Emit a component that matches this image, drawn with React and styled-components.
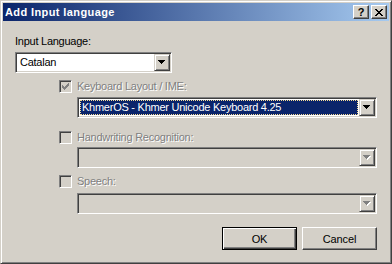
import React from "react";
import styled, { createGlobalStyle, css } from "styled-components";

const GlobalStyle = createGlobalStyle`
  html, body { margin: 0; padding: 0; background: #d4d0c8; }
  body { font-family: "Liberation Sans", Arial, sans-serif; font-size: 11px; }
  * { box-sizing: border-box; }
`;

const Window = styled.div`
  width: 392px;
  height: 264px;
  display: flex;
  flex-direction: column;
  background: #d4d0c8;
  border: 1px solid;
  border-color: #d4d0c8 #404040 #404040 #d4d0c8;
  box-shadow: inset 1px 1px #ffffff, inset -1px -1px #808080;
  padding: 2px;
`;

const TitleBar = styled.div`
  height: 18px;
  display: flex;
  align-items: center;
  padding: 0 2px;
  background: linear-gradient(to right, #0a246a, #a6caf0);
`;

const Title = styled.span`
  color: #ffffff;
  font-weight: bold;
  font-size: 11px;
  letter-spacing: 0.4px;
  line-height: 14px;
`;

const CaptionButtons = styled.div`
  margin-left: auto;
  display: flex;
  gap: 2px;
`;

const CaptionButton = styled.div`
  width: 16px;
  height: 14px;
  display: flex;
  align-items: center;
  justify-content: center;
  background: #d4d0c8;
  border: 1px solid;
  border-color: #ffffff #404040 #404040 #ffffff;
  box-shadow: inset -1px -1px #808080;
  color: #000;
  font-weight: bold;
  font-size: 11px;
  line-height: 12px;
`;

const Body = styled.div`
  flex: 1;
  display: flex;
  flex-direction: column;
  padding: 14px 12px 11px 12px;
`;

const Label = styled.div`
  height: 13px;
  line-height: 13px;
  color: ${(p) => (p.$disabled ? "#808080" : "#000")};
  text-shadow: ${(p) => (p.$disabled ? "1px 1px 0 #ffffff" : "none")};
  letter-spacing: -0.25px;
  white-space: nowrap;
`;

const Combo = styled.div`
  width: ${(p) => p.$width}px;
  height: 21px;
  margin-top: ${(p) => p.$mt || 0}px;
  margin-left: ${(p) => p.$ml || 0}px;
  display: flex;
  padding: 1px;
  border: 1px solid;
  border-color: #808080 #ffffff #ffffff #808080;
  box-shadow: inset 1px 1px #404040, inset -1px -1px #d4d0c8;
  background: ${(p) => (p.$disabled ? "#d4d0c8" : "#ffffff")};
`;

const ComboField = styled.div`
  flex: 1;
  min-width: 0;
  padding: 1px;
  display: flex;
`;

const ComboValue = styled.div`
  flex: 1;
  line-height: 15px;
  padding-left: 2px;
  letter-spacing: -0.25px;
  white-space: nowrap;
  overflow: hidden;
  ${(p) =>
    p.$selected
      ? css`
          background: #0a246a;
          color: #ffffff;
          outline: 1px dotted #f5db95;
          outline-offset: -1px;
        `
      : css`
          color: #000;
        `}
`;

const DropButton = styled.div`
  width: 16px;
  height: 17px;
  flex: none;
  display: flex;
  align-items: center;
  justify-content: center;
  background: #d4d0c8;
  border: 1px solid;
  border-color: #d4d0c8 #404040 #404040 #d4d0c8;
  box-shadow: inset 1px 1px #ffffff, inset -1px -1px #808080;
`;

const Group = styled.div`
  display: flex;
  flex-direction: column;
  padding-left: 44px;
  margin-top: 7px;
`;

const CheckRow = styled.div`
  display: flex;
  align-items: center;
  gap: 5px;
  height: 13px;
  margin-top: ${(p) => p.$mt || 0}px;
`;

const CheckBox = styled.div`
  width: 13px;
  height: 13px;
  flex: none;
  position: relative;
  border: 1px solid;
  border-color: #808080 #ffffff #ffffff #808080;
  box-shadow: inset 1px 1px #404040, inset -1px -1px #d4d0c8;
  background: ${(p) => (p.$disabled ? "#d4d0c8" : "#ffffff")};
  display: flex;
  align-items: center;
  justify-content: center;
`;

const Buttons = styled.div`
  display: flex;
  justify-content: flex-end;
  gap: 5px;
  margin-top: 13px;
`;

const PushButton = styled.div`
  width: 75px;
  height: 23px;
  display: flex;
  align-items: center;
  justify-content: center;
  background: #d4d0c8;
  color: #000;
  letter-spacing: -0.1px;
  border: 1px solid;
  ${(p) =>
    p.$default
      ? css`
          border-color: #000000;
          box-shadow: inset 1px 1px #ffffff, inset -1px -1px #404040,
            inset -2px -2px #808080;
        `
      : css`
          border-color: #ffffff #404040 #404040 #ffffff;
          box-shadow: inset -1px -1px #808080;
        `}
`;

const Arrow = ({ disabled }) => (
  <svg width="8" height="5" viewBox="0 0 8 5" shapeRendering="crispEdges">
    {disabled && (
      <path
        transform="translate(1 1)"
        fill="#ffffff"
        d="M0 0h7v1h-7z M1 1h5v1h-5z M2 2h3v1h-3z M3 3h1v1h-1z"
      />
    )}
    <path
      fill={disabled ? "#808080" : "#000000"}
      d="M0 0h7v1h-7z M1 1h5v1h-5z M2 2h3v1h-3z M3 3h1v1h-1z"
    />
  </svg>
);

const CheckMark = () => (
  <svg width="7" height="7" viewBox="0 0 7 7" shapeRendering="crispEdges">
    <path
      fill="#808080"
      d="M6 0h1v1h-1z M5 1h2v1h-2z M0 2h1v1h-1z M4 2h3v1h-3z M0 3h2v1h-2z M3 3h3v1h-3z M0 4h5v1h-5z M1 5h3v1h-3z M2 6h1v1h-1z"
    />
  </svg>
);

const CloseGlyph = () => (
  <svg width="8" height="7" viewBox="0 0 8 7" shapeRendering="crispEdges">
    <path
      fill="#000"
      d="M0 0h2v1h-2z M6 0h2v1h-2z M1 1h2v1h-2z M5 1h2v1h-2z M2 2h4v1h-4z M3 3h2v1h-2z M2 4h4v1h-4z M1 5h2v1h-2z M5 5h2v1h-2z M0 6h2v1h-2z M6 6h2v1h-2z"
    />
  </svg>
);

const ComboBox = ({ width, value, selected, disabled, mt, ml }) => (
  <Combo $width={width} $disabled={disabled} $mt={mt} $ml={ml}>
    <ComboField>
      <ComboValue $selected={selected}>{value}</ComboValue>
    </ComboField>
    <DropButton>
      <Arrow disabled={disabled} />
    </DropButton>
  </Combo>
);

const Option = ({ label, checked, mt }) => (
  <CheckRow $mt={mt}>
    <CheckBox $disabled>{checked && <CheckMark />}</CheckBox>
    <Label $disabled>{label}</Label>
  </CheckRow>
);

export default function App() {
  return (
    <>
      <GlobalStyle />
      <Window>
        <TitleBar>
          <Title>Add Input language</Title>
          <CaptionButtons>
            <CaptionButton>?</CaptionButton>
            <CaptionButton>
              <CloseGlyph />
            </CaptionButton>
          </CaptionButtons>
        </TitleBar>
        <Body>
          <Label>Input Language:</Label>
          <ComboBox width={157} value="Catalan" mt={4} />
          <Group>
            <Option label="Keyboard Layout / IME:" checked />
            <ComboBox
              width={300}
              mt={4}
              ml={18}
              selected
              value="KhmerOS - Khmer Unicode Keyboard 4.25"
            />
            <Option label="Handwriting Recognition:" mt={13} />
            <ComboBox width={300} mt={3} ml={18} disabled value="" />
            <Option label="Speech:" mt={7} />
            <ComboBox width={300} mt={5} ml={18} disabled value="" />
          </Group>
          <Buttons>
            <PushButton $default>OK</PushButton>
            <PushButton>Cancel</PushButton>
          </Buttons>
        </Body>
      </Window>
    </>
  );
}
